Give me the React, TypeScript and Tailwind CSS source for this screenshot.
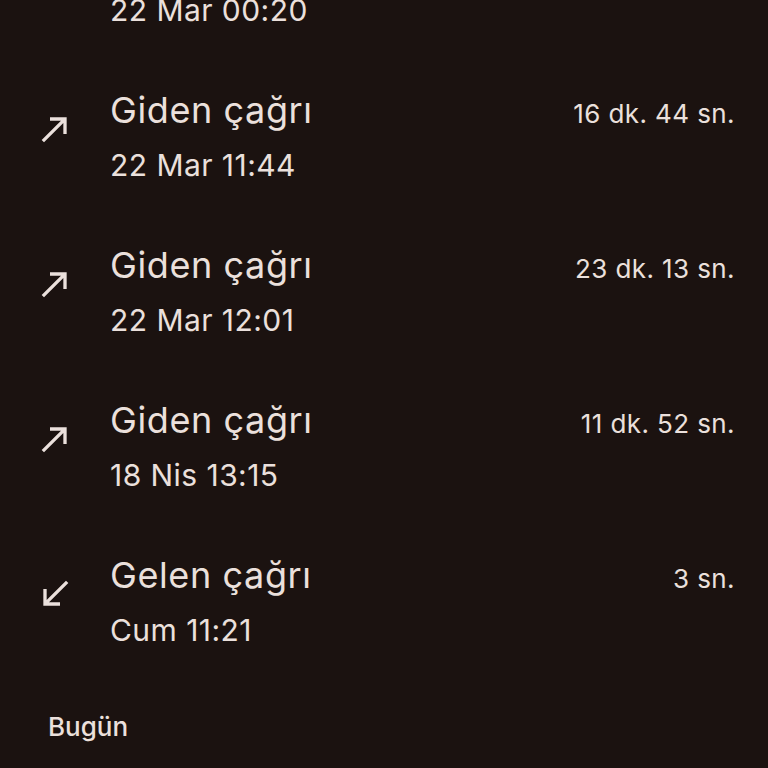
import React from "react";

const Out = () => (
  <svg viewBox="0 0 24 24" className="w-[40px] h-[40px]" fill="#ebe0dc">
    <path d="M9 5v2h6.59L4 18.59 5.41 20 17 8.41V15h2V5z" />
  </svg>
);
const In = () => (
  <svg viewBox="0 0 24 24" className="w-[40px] h-[40px]" fill="#ebe0dc">
    <path d="M20 5.41L18.59 4 7 15.59V9H5v10h10v-2H8.41z" />
  </svg>
);

type Row = { title: string; sub: string; dur: string; dir: "out" | "in" };
const rows: Row[] = [
  { title: "Giden çağrı", sub: "22 Mar 00:20", dur: "", dir: "out" },
  { title: "Giden çağrı", sub: "22 Mar 11:44", dur: "16 dk. 44 sn.", dir: "out" },
  { title: "Giden çağrı", sub: "22 Mar 12:01", dur: "23 dk. 13 sn.", dir: "out" },
  { title: "Giden çağrı", sub: "18 Nis 13:15", dur: "11 dk. 52 sn.", dir: "out" },
  { title: "Gelen çağrı", sub: "Cum 11:21", dur: "3 sn.", dir: "in" },
];

export default function App() {
  return (
    <div
      className="w-[768px] h-[768px] overflow-hidden bg-[#1b1210] text-[#ebe0dc]"
      style={{ fontFamily: "Inter, Roboto, sans-serif" }}
    >
      <div className="mt-[-97px] flex flex-col">
        {rows.map((r, i) => (
          <div key={i} className="flex items-center h-[155px] pl-[35px] pr-[33px]">
            <div className="w-[40px] mt-[-14px] flex-none">{r.dir === "out" ? <Out /> : <In />}</div>
            <div className="ml-[35px] flex-1 flex flex-col gap-[7px]">
              <div className="flex items-baseline justify-between">
                <span className="text-[36px] leading-[52px] tracking-[0.6px]">{r.title}</span>
                <span className="text-[26px] tracking-[0.4px]">{r.dur}</span>
              </div>
              <div className="text-[30px] leading-[44px] tracking-[0.45px]">{r.sub}</div>
            </div>
          </div>
        ))}
      </div>
      <div className="pl-[48px] pt-[33px] text-[26px] leading-[32px] font-medium">Bugün</div>
    </div>
  );
}
